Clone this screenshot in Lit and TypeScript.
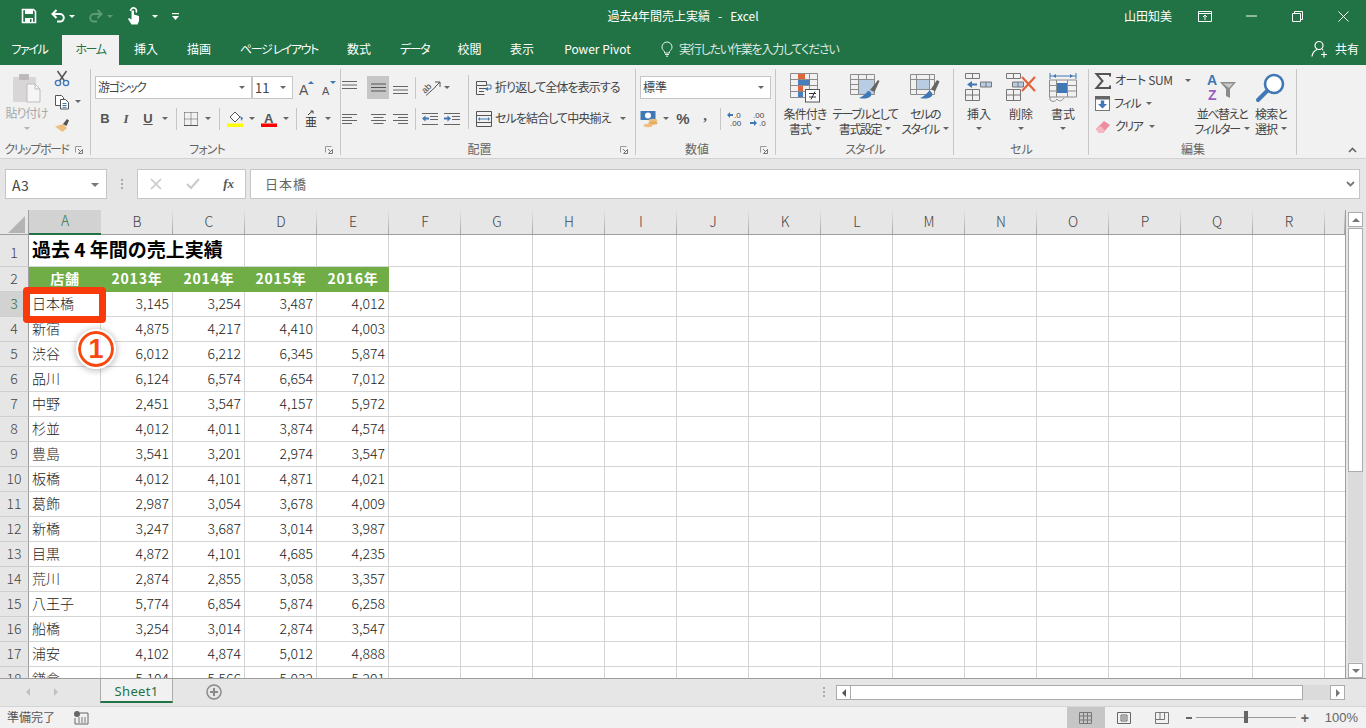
import { LitElement, html, css, svg } from 'lit';
import { customElement } from 'lit/decorators.js';

const ico = (w: number, h: number, body: unknown) =>
  html`<svg width=${w} height=${h} viewBox="0 0 ${w} ${h}" fill="none">${body}</svg>`;

// quick access toolbar
const saveIcon = ico(16, 16, svg`<path d="M1.5 1.5h11l2 2v11h-13z" stroke="#fff" stroke-width="1.6"/><path d="M4 1.5h8v4.5H4z" fill="#fff"/><path d="M4 10h8v5H4z" fill="#fff"/><path d="M9 11h1.5v3H9z" fill="#217346"/>`);
const undoIcon = (c: string) => ico(16, 16, svg`<path d="M6.5 2 2.5 6l4 4M3 6h7a3.8 3.8 0 0 1 0 7.6H7" stroke=${c} stroke-width="2"/>`);
const redoIcon = (c: string) => ico(16, 16, svg`<path d="M9.5 2l4 4-4 4M13 6H6a3.8 3.8 0 0 0 0 7.6h3" stroke=${c} stroke-width="2"/>`);
const touchIcon = ico(16, 20, svg`<path d="M4.5 5a3 3 0 1 1 5.500 1.500" stroke="#fff" stroke-width="1.6"/><path d="M5.500 4.500h2.500v4l5 1.500v5l-1.500 3.500H5.500L2 13l1-1 2.500 1.500z" fill="#fff"/>`);
const customIcon = ico(9, 9, svg`<path d="M1 1h7v1.2H1z" fill="#fff"/><path d="M1 4h7L4.500 8z" fill="#fff"/>`);
const bulbIcon = ico(12, 16, svg`<path d="M3.500 10.500C1.800 9 1 7.800 1 6a5 5 0 0 1 10 0c0 1.800-.8 3-2.500 4.500v1.500h-5zM4 13.500h4M5 15.200h2" stroke="#e8f0eb"/>`);
const userIcon = ico(17, 18, svg`<circle cx="8" cy="5.500" r="4" stroke="#fff" stroke-width="1.200"/><path d="M1 16.500c.5-4 2.500-6 5.200-7M11 9.300c.4.2.8.4 1.100.7M13 11.500v6M10 14.500h6" stroke="#fff" stroke-width="1.200"/>`);

// clipboard
const pasteIcon = ico(30, 30, svg`<rect x="1" y="4" width="23" height="25" rx="1" fill="#d9d6d8"/><rect x="7" y="1" width="10" height="6" rx="1" fill="#bdb9bc"/><path d="M15 11h8l5 5v13H15z" fill="#f6f6f6" stroke="#bdbdbd"/><path d="M23 11v5h5" stroke="#bdbdbd"/>`);
const cutIcon = ico(16, 17, svg`<path d="M3.500 1l7 10M12.500 1l-7 10" stroke="#555" stroke-width="1.500"/><circle cx="4" cy="13" r="2.600" stroke="#3f78b5" stroke-width="1.400"/><circle cx="12" cy="13" r="2.600" stroke="#3f78b5" stroke-width="1.400"/>`);
const copyIcon = ico(16, 16, svg`<path d="M1.500 1.500h6l2 2v8h-8z" fill="#fff" stroke="#555"/><path d="M6.500 5.500h5l3 3v6.500h-8z" fill="#fff" stroke="#555"/><path d="M8.500 9.500h4M8.500 11.500h4M8.500 13.300h4" stroke="#3f78b5"/>`);
const painterIcon = ico(16, 16, svg`<path d="M9 7l4 4-4.500 4L1 9.500z" fill="#edbe7d"/><path d="M9 7l4-5 2 1.500-2.500 5.500z" fill="#555"/>`);

// font
const growIcon = ico(16, 16, svg`<text x="0" y="15" font-size="14" fill="#555" font-family="Liberation Sans">A</text><path d="M9 4l3-3 3 3z" fill="#3f78b5"/>`);
const shrinkIcon = ico(16, 16, svg`<text x="1" y="15" font-size="11" fill="#555" font-family="Liberation Sans">A</text><path d="M9 1h6l-3 3z" fill="#3f78b5"/>`);
const borderIcon = ico(14, 14, svg`<path d="M.5.5h13M.5 7h13M.5.5v13M7 .5v13M13.500.5v13" stroke="#555" stroke-dasharray="1 1"/><path d="M0 13.500h14" stroke="#555"/>`);
const fillIcon = ico(17, 16, svg`<path d="M8 1l5 5-5 5-5-5z" fill="#fff" stroke="#555"/><path d="M13 5l3 2-1.500 3z" fill="#3f78b5"/><rect y="12.500" width="16" height="3.500" fill="#ff0"/>`);
const colorIcon = ico(16, 16, svg`<text x="3" y="12" font-size="13" font-weight="bold" fill="#555" font-family="Liberation Sans">A</text><rect y="12.500" width="16" height="3.500" fill="#f00"/>`);
const phoneticIcon = ico(12, 18, svg`<path d="M3 5l4-3.500M5.500 1h2.500v2.500" stroke="#333"/><text x="0" y="17" font-size="12" fill="#333" font-family="Noto Sans CJK JP">亜</text>`);

// alignment
const topIcon = ico(15, 13, svg`<path d="M0 .5h15M0 4h15M0 7.500h15" stroke="#666"/>`);
const midIcon = ico(15, 13, svg`<path d="M0 3h15M0 6.500h15M0 10h15" stroke="#555"/>`);
const botIcon = ico(15, 13, svg`<path d="M0 5.500h15M0 9h15M0 12.500h15" stroke="#666"/>`);
const alignL = ico(15, 12, svg`<path d="M0 1.500h15M0 4.500h10M0 7.500h15M0 10.500h10" stroke="#666"/>`);
const alignC = ico(15, 12, svg`<path d="M0 1.500h15M2.500 4.500h10M0 7.500h15M2.500 10.500h10" stroke="#666"/>`);
const alignR = ico(15, 12, svg`<path d="M0 1.500h15M5 4.500h10M0 7.500h15M5 10.500h10" stroke="#666"/>`);
const orientIcon = ico(19, 16, svg`<text x="0" y="0" font-size="9" fill="#444" font-family="Liberation Sans" transform="translate(3 14) rotate(-45)">ab</text><path d="M4 15.500l10-9" stroke="#555"/><path d="M13 2h5v5M18 2l-5 5" stroke="#555"/>`);
const outdentIcon = ico(16, 12, svg`<path d="M0 .5h16M8 3.500h8M8 6.500h8M0 11.500h16" stroke="#666"/><path d="M0 5.500l3.500-3v2H7v2H3.500v2z" fill="#3f78b5"/>`);
const indentIcon = ico(16, 12, svg`<path d="M0 .5h16M8 3.500h8M8 6.500h8M0 11.500h16" stroke="#666"/><path d="M7 5.500l-3.500-3v2H0v2h3.500v2z" fill="#3f78b5"/>`);
const wrapIcon = ico(16, 16, svg`<path d="M.5 1.500h10v4H.5zM.5 5.500v9h8M3 8.500h8M3 11.500h5" stroke="#555"/><path d="M11 5h4v4h-4" stroke="#3f78b5"/><path d="M9 9l3-2v4z" fill="#3f78b5"/>`);
const mergeIcon = ico(16, 16, svg`<path d="M.5 .5h15v15H.5zM.5 4.500h15M.5 11.500h15" stroke="#555"/><path d="M3 8h10" stroke="#3f78b5"/><path d="M2 8l2-2v4zM14 8l-2-2v4z" fill="#3f78b5"/>`);

// number
const acctIcon = ico(20, 18, svg`<rect x=".5" y="1" width="15" height="9" fill="#3f78b5"/><circle cx="8" cy="5.500" r="3" fill="#fff"/><ellipse cx="13" cy="10.500" rx="4.500" ry="1.700" fill="#edbe7d"/><ellipse cx="13" cy="13" rx="4.500" ry="1.700" fill="#e7ad5d"/><ellipse cx="8" cy="15.500" rx="4.500" ry="1.700" fill="#edbe7d"/>`);
const incIcon = ico(18, 16, svg`<path d="M0 4l3-3v2h3v2H3v2z" fill="#3f78b5"/><text x="7" y="7" font-size="8" fill="#444" font-family="Liberation Sans">.0</text><text x="3" y="15" font-size="8" fill="#444" font-family="Liberation Sans">.00</text>`);
const decIcon = ico(18, 16, svg`<text x="3" y="7" font-size="8" fill="#444" font-family="Liberation Sans">.00</text><text x="9" y="15" font-size="8" fill="#444" font-family="Liberation Sans">.0</text><path d="M7 12l-3-3v2H0v2h4v2z" fill="#3f78b5"/>`);

// styles
const condIcon = ico(30, 30, svg`<path d="M.5.5h27v24H.5zM.5 6.500h27M.5 12.500h27M.5 18.500h27M8.500.5v24M19.500.5v24" stroke="#8c8c8c"/><rect x="8" y="1" width="7" height="5" fill="#e0643c"/><rect x="8" y="7" width="12" height="5" fill="#4a7ebb"/><rect x="8" y="13" width="5" height="5" fill="#e0643c"/><rect x="8" y="19" width="5" height="5" fill="#4a7ebb"/><rect x="15.500" y="16.500" width="14" height="12.500" fill="#fff" stroke="#555"/><path d="M19 20.500h7M19 24h7M25 18.500l-4 8" stroke="#333"/>`);
const tableIcon = ico(30, 30, svg`<path d="M.5 1.500h24v20H.5zM.5 6.500h24M.5 11.500h24M.5 16.500h24M8.500 1.500v20M16.500 1.500v20" stroke="#8c8c8c"/><rect x="9" y="7" width="15" height="14" fill="#b8cce4"/><path d="M20 17l8-10 1.500 1-5 11z" fill="#666"/><path d="M18 18c2 0 4 2 3 5-3 3-8 3-12 2 3-1 5-3 9-7z" fill="#3f78b5"/>`);
const cellStyleIcon = ico(30, 30, svg`<path d="M.5 1.500h24v20H.5zM.5 6.500h24M.5 16.500h24M6.500 1.500v20M19.500 1.500v20" stroke="#8c8c8c"/><rect x="7" y="7" width="12" height="9" fill="#b8cce4"/><path d="M21 16l6-9 2.500 1.500-4.500 10z" fill="#666"/><path d="M19 18c2 0 4 2 3 5-3 3-8 3-12 2 3-1 5-3 9-7z" fill="#3f78b5"/>`);

// cells
const insertIcon = ico(28, 28, svg`<path d="M.5.5h14v5H.5zM7.500.5v5M.5 16.500h14v11H.5zM.5 22h14M7.500 16.500v11" stroke="#777"/><path d="M15.500 9h11v5h-11zM21 9v5" stroke="#777" fill="#b8cce4"/><path d="M2 11.500l5-3.500v2.500h5v2H7v2.500z" fill="#3f78b5"/>`);
const deleteIcon = ico(30, 28, svg`<path d="M.5.5h14v5H.5zM7.500.5v5M.5 16.500h14v11H.5zM.5 22h14M7.500 16.500v11" stroke="#777"/><path d="M6.500 9h11v5h-11zM12 9v5" stroke="#777" fill="#b8cce4"/><path d="M16 4l13 14M29 4L16 18" stroke="#e0643c" stroke-width="2.200"/>`);
const formatIcon = ico(28, 30, svg`<path d="M.5 7h27v17H.5zM.5 12.500h27M.5 18h27M7.500 7v17M18.500 7v17" stroke="#8c8c8c"/><rect x="8" y="10" width="10" height="10" fill="#3f78b5"/><path d="M1 3h26M1 0v6M27 0v6" stroke="#3f78b5"/><path d="M4 3l3-2v4zM24 3l-3-2v4z" fill="#3f78b5"/><path d="M1 24v3c3 2 5 2 7-1 2 3 5 2 7-1" stroke="#8c8c8c"/>`);

// editing
const sigmaIcon = ico(16, 16, svg`<path d="M15 3.500V1H1.500l6 7-6 7H15v-2.500" stroke="#555" stroke-width="2"/>`);
const fillDownIcon = ico(15, 15, svg`<rect x=".5" y=".5" width="14" height="14" fill="#fff" stroke="#777"/><rect y="0" width="15" height="3.500" fill="#666"/><path d="M7.500 12.500L3 8h2.800V4.500h3.400V8H12z" fill="#3f78b5"/>`);
const eraserIcon = ico(16, 14, svg`<path d="M1 9l8-8 6 4-7 8H4z" fill="#ee8d9d"/><path d="M1 9l3 4h4l2-2.500L5.500 6z" fill="#f5b7c1"/>`);
const sortIcon = ico(30, 28, svg`<text x="0" y="12" font-size="14" font-weight="bold" fill="#3f78b5" font-family="Liberation Sans">A</text><text x="1" y="27" font-size="14" font-weight="bold" fill="#9a5fbf" font-family="Liberation Sans">Z</text><path d="M13 9h16l-6 7v9l-4-2v-7z" fill="#8c8c8c"/><path d="M16 10.500h10l-4 4.500z" fill="#ccc"/>`);
const searchIcon = ico(30, 30, svg`<circle cx="18" cy="11" r="9" fill="#fff" stroke="#3f78b5" stroke-width="2.600"/><path d="M11 18L2 27" stroke="#3f78b5" stroke-width="4" stroke-linecap="round"/>`);

// formula bar & status bar
const xIcon = ico(12, 12, svg`<path d="M1 1l10 10M11 1L1 11" stroke="#c9c9c9" stroke-width="1.600"/>`);
const checkIcon = ico(14, 12, svg`<path d="M1 6l4 4 8-9" stroke="#c9c9c9" stroke-width="2"/>`);
const cornerIcon = ico(17, 17, svg`<path d="M17 0v17H0z" fill="#b4b4b4"/>`);
const macroIcon = ico(14, 13, svg`<circle cx="3" cy="3" r="3" fill="#666"/><path d="M6 2h8v11H1V7" stroke="#666"/><path d="M4 7h8M4 9h8M4 11h8" stroke="#777" stroke-dasharray="2 1"/>`);
const gridViewIcon = ico(13, 12, svg`<path d="M.5.5h12v11H.5zM.5 4h12M.5 8h12M4.500.5v11M8.500.5v11" stroke="#777"/>`);
const pageViewIcon = ico(14, 12, svg`<path d="M.5.5h13v11H.5z" stroke="#666"/><path d="M4 3h6v6H4zM5 5h4M5 7h4" stroke="#666"/>`);
const breakViewIcon = ico(14, 12, svg`<path d="M.5.5h13v11H.5zM.5 7.500h9V.5M5 .5v7" stroke="#777"/>`);
const chevronIcon = ico(9, 6, svg`<path d="M1 1l3.500 3.500L8 1" stroke="#777" stroke-width="1.800"/>`);
const plusCircleIcon = ico(16, 16, svg`<circle cx="8" cy="8" r="7" stroke="#8a8a8a" stroke-width="1.500"/><path d="M8 4v8M4 8h8" stroke="#8a8a8a" stroke-width="2"/>`);
const launcherIcon = ico(8, 8, svg`<path d="M.5.5h6M.5.5v6" stroke="#999"/><path d="M7.500 7.500H3.500l4-4zM3 3l2 2" stroke="#777"/>`);

const TABS = ['ファイル', 'ホーム', '挿入', '描画', 'ページ レイアウト', '数式', 'データ', '校閲', '表示', 'Power Pivot'];
const COLS = ['A', 'B', 'C', 'D', 'E', 'F', 'G', 'H', 'I', 'J', 'K', 'L', 'M', 'N', 'O', 'P', 'Q', 'R', ''];
const HEAD = ['店舗', '2013年', '2014年', '2015年', '2016年'];
const SALES: [string, string, string, string, string][] = [
  ['日本橋', '3,145', '3,254', '3,487', '4,012'],
  ['新宿', '4,875', '4,217', '4,410', '4,003'],
  ['渋谷', '6,012', '6,212', '6,345', '5,874'],
  ['品川', '6,124', '6,574', '6,654', '7,012'],
  ['中野', '2,451', '3,547', '4,157', '5,972'],
  ['杉並', '4,012', '4,011', '3,874', '4,574'],
  ['豊島', '3,541', '3,201', '2,974', '3,547'],
  ['板橋', '4,012', '4,101', '4,871', '4,021'],
  ['葛飾', '2,987', '3,054', '3,678', '4,009'],
  ['新橋', '3,247', '3,687', '3,014', '3,987'],
  ['目黒', '4,872', '4,101', '4,685', '4,235'],
  ['荒川', '2,874', '2,855', '3,058', '3,357'],
  ['八王子', '5,774', '6,854', '5,874', '6,258'],
  ['船橋', '3,254', '3,014', '2,874', '3,547'],
  ['浦安', '4,102', '4,874', '5,012', '4,888'],
  ['鎌倉', '5,104', '5,566', '5,032', '5,201'],
];
const KANA_TABS = ['ファイル', 'ホーム', 'ページ レイアウト', 'データ'];

@customElement('app-root')
export class AppRoot extends LitElement {
  static styles = css`
    :host {
      display: flex;
      flex-direction: column;
      position: relative;
      width: 1366px;
      height: 728px;
      overflow: hidden;
      background: #e6e6e6;
      color: #444;
      font: 12px/1.2 "Noto Sans CJK JP", "Liberation Sans", sans-serif;
      font-feature-settings: "palt";
    }
    :host > * { flex: none; }
    svg { display: block; flex: none; overflow: visible; }

    /* Yu Gothic kana run narrower than Noto's, even with palt */
    .k { letter-spacing: -1.4px; }
    .k2 { letter-spacing: -.9px; }
    .k3 { letter-spacing: -.4px; }

    /* title bar */
    .title { display: grid; grid-template-columns: 1fr auto 1fr; height: 35px; box-sizing: border-box; padding-bottom: 3px; align-items: center; background: #217346; color: #fff; }
    .qat { display: flex; align-items: center; padding-left: 21px; }
    .qat-item { display: flex; align-items: center; justify-content: center; }
    .q-gap { margin-left: 13px; }
    .wincap { display: flex; justify-content: flex-end; align-items: center; }
    .user { margin-right: 10px; font-size: 12px; }
    .winbtn { width: 46px; height: 32px; display: flex; align-items: center; justify-content: center; }

    .caret { width: 0; height: 0; border-left: 3px solid transparent; border-right: 3px solid transparent; border-top: 3px solid #666; flex: none; }
    .caret.w { border-top-color: #fff; }
    .caret.dim { border-top-color: #5c9a78; }

    /* tabs */
    .tabs { display: flex; height: 30px; background: #217346; color: #fff; align-items: stretch; }
    .tablist { display: grid; grid-template-columns: 59px 3px 57px 54px 52px 108px 52px 59px 51px 54px 97px; }
    .tab { display: flex; align-items: center; justify-content: center; white-space: nowrap; padding-bottom: 2px; }
    .tab.on { background: #f1f1f1; color: #217346; }
    .tell { display: flex; align-items: center; gap: 6px; margin-left: 15px; padding-bottom: 2px; color: #dfe9e3; letter-spacing: -1.200px; }
    .share { margin-left: auto; display: flex; align-items: center; gap: 7px; padding: 0 7px 2px 0; }

    /* ribbon */
    .ribbon { display: flex; height: 94px; box-sizing: border-box; background: #f1f1f1; border-bottom: 1px solid #d2d2d2; }
    .group { display: flex; flex-direction: column; position: relative; height: 93px; }
    .group::after { content: ""; position: absolute; right: 0; top: 4px; bottom: 3px; width: 1px; background: #c6c6c6; }
    .g-clip { width: 91px; }
    .g-font { width: 250px; }
    .g-align { width: 295px; }
    .g-num { width: 140px; }
    .g-style { width: 178px; }
    .g-cell { width: 135px; }
    .g-edit { width: 208px; }
    .gbody { flex: 1; display: flex; }
    .glabel { height: 19px; box-sizing: border-box; padding-top: 2px; display: flex; align-items: center; justify-content: center; color: #666; position: relative; white-space: nowrap; }
    .glabel.lch { padding-right: 18px; }
    .launch { position: absolute; right: 8px; top: 7px; letter-spacing: 0; }
    .rest { flex: 1; display: flex; justify-content: flex-end; align-items: flex-end; padding: 0 9px 5px 0; }

    .stack { display: flex; flex-direction: column; padding-top: 11px; gap: 8px; }
    .row { display: flex; align-items: center; height: 23px; }
    .tool { width: 22px; height: 22px; display: flex; align-items: center; justify-content: center; flex: none; }
    .tool.s16 { width: 16px; }
    .tool.s20 { width: 20px; }
    .tool.on { width: 22px; height: 23px; background: #c6c6c6; }
    .cw { width: 12px; height: 22px; display: flex; align-items: center; justify-content: center; flex: none; }
    .vsep { width: 1px; height: 22px; background: #c6c6c6; flex: none; }
    .m5-3 { margin: 0 3px 0 5px; }
    .m5-4 { margin: 0 4px 0 5px; }
    .m4-3 { margin: 0 3px 0 4px; }
    .m4-5 { margin: 0 5px 0 4px; }
    .ml10 { margin-left: 10px; }
    .ml3 { margin-left: 3px; }
    .b { font: bold 13px "Liberation Sans", sans-serif; color: #555; }
    .i { font: italic bold 13px "Liberation Serif", serif; color: #555; }
    .u { font: bold 13px "Liberation Sans", sans-serif; color: #555; text-decoration: underline; }
    .pct { font: bold 15px "Liberation Sans", sans-serif; color: #555; }
    .cm { font: bold 15px "Liberation Serif", serif; color: #555; padding-bottom: 6px; }

    .combo { height: 23px; background: #fff; border: 1px solid #c6c6c6; box-sizing: border-box; display: flex; align-items: center; justify-content: space-between; padding: 0 6px 0 2px; }
    .c-font { width: 157px; }
    .c-size { width: 41px; font-size: 13px; }
    .c-num { width: 131px; }

    .clip-l { width: 50px; padding: 8px 0 0 3px; box-sizing: border-box; display: flex; flex-direction: column; align-items: center; color: #a8a8a8; gap: 3px; white-space: nowrap; }
    .clip-l .caret { border-top-color: #b5b5b5; margin-top: 4px; }
    .clip-r { padding: 2px 0 0 4px; display: flex; flex-direction: column; }
    .clip-r .row { gap: 5px; }
    .pad-font { padding-left: 4px; }
    .pad-num { padding-left: 4px; }
    .a-left { width: 127px; }
    .a-sep { width: 1px; height: 54px; margin-top: 10px; background: #c6c6c6; }
    .a-right { padding-left: 7px; }
    .a-text { margin-left: 3px; white-space: nowrap; }
    .a-caret { margin-left: 9px; }

    .big { display: flex; flex-direction: column; align-items: center; padding-top: 8px; white-space: nowrap; line-height: 15px; flex: none; }
    .big .pic { height: 30px; display: flex; align-items: flex-start; margin-bottom: 3px; }
    .big .lbl { display: flex; align-items: center; gap: 4px; height: 15px; }
    .big .lone { height: 14px; display: flex; align-items: center; }
    .w60 { width: 60px; }
    .w42 { width: 42px; }
    .w54 { width: 54px; }
    .w44 { width: 44px; }
    .st-pad { margin-left: -1px; }
    .ce-pad { padding-left: 4px; }
    .ed-left { width: 106px; padding: 4px 0 0 6px; box-sizing: border-box; display: flex; flex-direction: column; }
    .ed-row { display: flex; align-items: center; height: 23px; white-space: nowrap; }
    .ed-row span { margin-left: 4px; }
    .ed-row .caret { margin-left: 6px; }
    .ed-row .far { margin-left: 12px; }

    /* formula bar */
    .fbar { height: 40px; box-sizing: border-box; padding: 10px 6px 0 5px; display: flex; align-items: flex-start; }
    .fbox { height: 30px; background: #fff; border: 1px solid #c6c6c6; box-sizing: border-box; display: flex; align-items: center; }
    .name { width: 102px; padding: 2px 7px 0 6px; justify-content: space-between; font-size: 14px; letter-spacing: .5px; }
    .name .caret { border-left-width: 4px; border-right-width: 4px; border-top-width: 4px; border-top-color: #777; }
    .dots { width: 30px; height: 30px; display: flex; flex-direction: column; align-items: center; justify-content: center; gap: 2px; }
    .dots i { width: 2px; height: 2px; background: #aaa; }
    .fx { width: 109px; padding: 0 11px 0 12px; justify-content: space-between; margin-right: 4px; }
    .fx em { font: italic 13px "Liberation Serif", serif; color: #555; font-weight: bold; }
    .input { flex: 1; padding: 0 4px 0 14px; justify-content: space-between; color: #666; font-size: 13px; letter-spacing: 1px; }

    /* sheet */
    .sheetwrap { display: flex; height: 468px; margin-top: 11px; }
    .sheet { width: 1346px; height: 468px; overflow: hidden; border-right: 1px solid #9e9e9e; box-sizing: border-box; background: #fff; }
    .cells { display: grid; grid-template-columns: 29px repeat(18, 72px) 20px; grid-template-rows: 25px 32px repeat(17, 25px); font-size: 14px; font-weight: 300; color: #222; font-feature-settings: normal; }
    .cells > div { box-sizing: border-box; white-space: nowrap; display: flex; align-items: center; }
    .corner { background: #e6e6e6; border-right: 1px solid #9e9e9e; border-bottom: 1px solid #9e9e9e; justify-content: flex-end; padding: 4px 3px 0 0; }
    .ch { background: linear-gradient(#e6e6e6, #a6a6a6) right / 1px 100% no-repeat, #e6e6e6; border-bottom: 1px solid #9e9e9e; justify-content: center; color: #444; padding-bottom: 2px; }
    .ch.sel { background: #d2d2d2; color: #217346; border-bottom: 2px solid #217346; }
    .rh { background: #e6e6e6; border-right: 1px solid #9e9e9e; border-bottom: 1px solid #cfcfcf; justify-content: center; color: #444; padding-bottom: 2px; }
    .rh.sel { background: #d2d2d2; color: #217346; }
    .rh.first { padding: 4px 0 0; }
    .c { border-right: 1px solid #d4d4d4; border-bottom: 1px solid #d4d4d4; padding: 0 3px 2px 3px; }
    .c.num { justify-content: flex-end; }
    .c.last { border-right: none; }
    .c.hero { grid-column: span 3; font-size: 19px; font-weight: bold; color: #000; padding-bottom: 2px; }
    .c.green { background: #70ad47; border-color: #70ad47; border-right: none; color: #fff; font-weight: bold; justify-content: center; letter-spacing: .8px; }

    .vscroll { flex: 1; display: flex; flex-direction: column; padding: 2px 3px 0 2px; gap: 1px; }
    .sbtn { box-sizing: border-box; background: #fff; border: 1px solid #ababab; display: flex; align-items: center; justify-content: center; flex: none; }
    .vbtn { height: 15px; }
    .up { width: 0; height: 0; border-left: 4px solid transparent; border-right: 4px solid transparent; border-bottom: 4px solid #777; }
    .down { width: 0; height: 0; border-left: 4px solid transparent; border-right: 4px solid transparent; border-top: 4px solid #777; }
    .vthumb { height: 244px; box-sizing: border-box; background: #fff; border: 1px solid #ababab; flex: none; }
    .vtrack { flex: 1; background: #dbdbdb; margin-top: -1px; }

    /* sheet tabs */
    .sheetbar { height: 28px; display: flex; align-items: flex-start; border-top: 1px solid #9e9e9e; box-sizing: border-box; }
    .nav { width: 100px; height: 26px; display: flex; align-items: center; gap: 24px; padding-left: 26px; box-sizing: border-box; }
    .nl { width: 0; height: 0; border-top: 4px solid transparent; border-bottom: 4px solid transparent; border-right: 4px solid #c0c0c0; }
    .nr { width: 0; height: 0; border-top: 4px solid transparent; border-bottom: 4px solid transparent; border-left: 4px solid #c0c0c0; }
    .stab { width: 73px; height: 24px; box-sizing: border-box; padding-top: 1px; background: #f1f1f1; color: #217346; border-left: 1px solid #ababab; border-right: 1px solid #ababab; border-bottom: 2px solid #217346; display: flex; align-items: center; justify-content: center; font: 13px "Noto Sans", sans-serif; letter-spacing: .3px; }
    .add { margin: 5px 0 0 33px; }
    .hs-dots { margin-left: auto; width: 24px; height: 26px; display: flex; flex-direction: column; align-items: center; justify-content: center; gap: 2px; }
    .hs-dots i { width: 2px; height: 2px; background: #aaa; }
    .hscroll { width: 509px; height: 15px; margin: 6px 21px 0 0; display: flex; }
    .hbtn { width: 15px; height: 15px; }
    .hl { width: 0; height: 0; border-top: 4px solid transparent; border-bottom: 4px solid transparent; border-right: 4px solid #555; }
    .hr { width: 0; height: 0; border-top: 4px solid transparent; border-bottom: 4px solid transparent; border-left: 4px solid #777; }
    .hthumb { width: 453px; box-sizing: border-box; background: #fff; border: 1px solid #ababab; margin-left: -1px; }
    .htrack { flex: 1; background: #dbdbdb; }

    /* status bar */
    .status { height: 22px; background: #f1f1f1; border-top: 1px solid #d4d4d4; box-sizing: border-box; display: flex; align-items: center; padding: 0 8px 0 7px; color: #555; }
    .macro { margin-left: 19px; }
    .views { margin-left: auto; display: flex; height: 21px; }
    .view { width: 38px; display: flex; align-items: center; justify-content: center; }
    .view.on { background: #c6c6c6; }
    .zoomer { display: flex; align-items: center; margin-left: 5px; }
    .zminus { width: 6px; height: 2px; background: #666; }
    .ztrack { width: 100px; height: 1px; background: #999; margin: 0 5px 0 4px; position: relative; }
    .zthumb { position: absolute; left: 48px; top: -6px; width: 4px; height: 12px; background: #666; }
    .zplus { font: bold 14px "Liberation Sans", sans-serif; color: #666; width: 8px; display: flex; justify-content: center; }
    .zpct { margin-left: 16px; font: 13px "Liberation Sans", sans-serif; color: #666; }

    /* annotation over the sheet */
    .mark { position: absolute; left: 23px; top: 287px; width: 83px; height: 36px; box-sizing: border-box; border: 7px solid #f93a0b; border-radius: 4px; }
    .num1 { position: absolute; left: 78px; top: 331px; width: 36px; height: 36px; box-sizing: border-box; border-radius: 50%; border: 3px solid #f9480f; outline: 2px solid #fff; outline-offset: 0; box-shadow: 0 1px 6px 3px rgba(0, 0, 0, .25); background: rgba(255, 255, 255, .7); color: #f9480f; font: bold 27px/30px "Liberation Sans", sans-serif; text-align: center; }
  `;

  private big(pic: unknown, first: string, second: string | null, widthClass: string, kana = '') {
    return html`<div class="big ${widthClass}">
      <div class="pic">${pic}</div>
      ${second === null
        ? html`<div class="lbl">${first}</div><div class="lone"><i class="caret"></i></div>`
        : html`<div class="lbl ${kana}">${first}</div><div class="lbl ${kana}">${second}<i class="caret"></i></div>`}
    </div>`;
  }

  private renderTitle() {
    return html`<div class="title">
      <div class="qat">
        <div class="qat-item">${saveIcon}</div>
        <div class="qat-item q-gap">${undoIcon('#fff')}</div>
        <div class="qat-item ml3"><i class="caret w"></i></div>
        <div class="qat-item q-gap">${redoIcon('#5c9a78')}</div>
        <div class="qat-item ml3"><i class="caret dim"></i></div>
        <div class="qat-item q-gap">${touchIcon}</div>
        <div class="qat-item ml10"><i class="caret w"></i></div>
        <div class="qat-item q-gap">${customIcon}</div>
      </div>
      <div>過去4年間売上実績 &nbsp; - &nbsp; Excel</div>
      <div class="wincap">
        <span class="user">山田知美</span>
        <div class="winbtn">${ico(14, 11, svg`<path d="M.5.5h13v10H.5zM.5 2.500h13M7 9V4.500M5 6l2-2 2 2" stroke="#fff"/>`)}</div>
        <div class="winbtn">${ico(11, 2, svg`<path d="M0 1h11" stroke="#fff"/>`)}</div>
        <div class="winbtn">${ico(11, 11, svg`<path d="M.5 2.500h8v8h-8zM2.500 2.500v-2h8v8h-2" stroke="#fff"/>`)}</div>
        <div class="winbtn">${ico(11, 11, svg`<path d="M.5.5l10 10M10.500.5l-10 10" stroke="#fff"/>`)}</div>
      </div>
    </div>`;
  }

  private renderTabs() {
    const cls = (t: string) => `tab ${t === 'ホーム' ? 'on' : ''} ${KANA_TABS.includes(t) ? 'k' : ''}`;
    return html`<div class="tabs">
      <div class="tablist">
        <div class=${cls(TABS[0])}>${TABS[0]}</div><div></div>
        ${TABS.slice(1).map((t) => html`<div class=${cls(t)}>${t}</div>`)}
      </div>
      <div class="tell">${bulbIcon}<span>実行したい作業を入力してください</span></div>
      <div class="share">${userIcon}<span>共有</span></div>
    </div>`;
  }

  private renderRibbon() {
    return html`<div class="ribbon">
      <div class="group g-clip">
        <div class="gbody">
          <div class="clip-l">${pasteIcon}<span class="k2">貼り付け</span><i class="caret"></i></div>
          <div class="clip-r">
            <div class="row">${cutIcon}</div>
            <div class="row">${copyIcon}<i class="caret"></i></div>
            <div class="row">${painterIcon}</div>
          </div>
        </div>
        <div class="glabel lch k">クリップボード<span class="launch">${launcherIcon}</span></div>
      </div>

      <div class="group g-font">
        <div class="gbody pad-font"><div class="stack">
          <div class="row">
            <div class="combo c-font"><span class="k">游ゴシック</span><i class="caret"></i></div>
            <div class="combo c-size"><span>11</span><i class="caret"></i></div>
            <div class="tool ml3">${growIcon}</div><div class="tool">${shrinkIcon}</div>
          </div>
          <div class="row">
            <div class="tool s20 b">B</div><div class="tool i">I</div><div class="tool u">U</div>
            <div class="cw"><i class="caret"></i></div><i class="vsep m5-3"></i>
            <div class="tool">${borderIcon}</div><div class="cw"><i class="caret"></i></div><i class="vsep m5-4"></i>
            <div class="tool">${fillIcon}</div><div class="cw"><i class="caret"></i></div>
            <div class="tool">${colorIcon}</div><div class="cw"><i class="caret"></i></div><i class="vsep m4-3"></i>
            <div class="tool">${phoneticIcon}</div><div class="cw"><i class="caret"></i></div>
          </div>
        </div></div>
        <div class="glabel lch k2">フォント<span class="launch">${launcherIcon}</span></div>
      </div>

      <div class="group g-align">
        <div class="gbody">
          <div class="stack a-left">
            <div class="row">
              <div class="tool s16">${topIcon}</div><div class="tool on ml10">${midIcon}</div><div class="tool">${botIcon}</div>
              <i class="vsep m4-5"></i><div class="tool s20">${orientIcon}</div><div class="cw"><i class="caret"></i></div>
            </div>
            <div class="row">
              <div class="tool s16">${alignL}</div><div class="tool ml10">${alignC}</div><div class="tool">${alignR}</div>
              <i class="vsep m4-3"></i><div class="tool">${outdentIcon}</div><div class="tool">${indentIcon}</div>
            </div>
          </div>
          <i class="a-sep"></i>
          <div class="stack a-right">
            <div class="row">${wrapIcon}<span class="a-text k2">折り返して全体を表示する</span></div>
            <div class="row">${mergeIcon}<span class="a-text k2">セルを結合して中央揃え</span><i class="caret a-caret"></i></div>
          </div>
        </div>
        <div class="glabel lch">配置<span class="launch">${launcherIcon}</span></div>
      </div>

      <div class="group g-num">
        <div class="gbody pad-num"><div class="stack">
          <div class="row"><div class="combo c-num"><span>標準</span><i class="caret"></i></div></div>
          <div class="row">
            <div class="tool s20">${acctIcon}</div><div class="cw"><i class="caret"></i></div>
            <div class="tool pct">%</div><div class="tool cm">,</div>
            <i class="vsep m4-5"></i><div class="tool s20">${incIcon}</div><div class="tool s20 ml3">${decIcon}</div>
          </div>
        </div></div>
        <div class="glabel lch">数値<span class="launch">${launcherIcon}</span></div>
      </div>

      <div class="group g-style">
        <div class="gbody st-pad">
          ${this.big(condIcon, '条件付き', '書式', 'w60', 'k2')}
          ${this.big(tableIcon, 'テーブルとして', '書式設定', 'w60', 'k')}
          ${this.big(cellStyleIcon, 'セルの', 'スタイル', 'w60', 'k')}
        </div>
        <div class="glabel k2">スタイル</div>
      </div>

      <div class="group g-cell">
        <div class="gbody ce-pad">
          ${this.big(insertIcon, '挿入', null, 'w42')}
          ${this.big(deleteIcon, '削除', null, 'w42')}
          ${this.big(formatIcon, '書式', null, 'w42')}
        </div>
        <div class="glabel">セル</div>
      </div>

      <div class="group g-edit">
        <div class="gbody">
          <div class="ed-left">
            <div class="ed-row">${sigmaIcon}<span class="k3">オート SUM</span><i class="caret far"></i></div>
            <div class="ed-row">${fillDownIcon}<span class="k">フィル</span><i class="caret"></i></div>
            <div class="ed-row">${eraserIcon}<span class="k">クリア</span><i class="caret"></i></div>
          </div>
          ${this.big(sortIcon, '並べ替えと', 'フィルター', 'w54', 'k')}
          ${this.big(searchIcon, '検索と', '選択', 'w44', 'k2')}
        </div>
        <div class="glabel">編集</div>
      </div>

      <div class="rest">${ico(9, 6, svg`<path d="M1 5l3.500-3.500L8 5" stroke="#666" stroke-width="1.600"/>`)}</div>
    </div>`;
  }

  private renderFormula() {
    return html`<div class="fbar">
      <div class="fbox name"><span>A3</span><i class="caret"></i></div>
      <div class="dots"><i></i><i></i><i></i></div>
      <div class="fbox fx">${xIcon}${checkIcon}<em>fx</em></div>
      <div class="fbox input"><span>日本橋</span>${chevronIcon}</div>
    </div>`;
  }

  private renderCells() {
    const blanks = (from: number) =>
      COLS.slice(from).map((_, i) => html`<div class="c ${from + i === COLS.length - 1 ? 'last' : ''}"></div>`);
    return html`<div class="cells">
      <div class="corner">${cornerIcon}</div>
      ${COLS.map((c) => html`<div class="ch ${c === 'A' ? 'sel' : ''}">${c}</div>`)}

      <div class="rh first">1</div>
      <div class="c hero">過去 4 年間の売上実績</div>
      ${blanks(3)}

      <div class="rh">2</div>
      ${HEAD.map((h) => html`<div class="c green">${h}</div>`)}
      ${blanks(5)}

      ${SALES.map((row, i) => html`
        <div class="rh ${i === 0 ? 'sel' : ''}">${i + 3}</div>
        <div class="c">${row[0]}</div>
        ${row.slice(1).map((v) => html`<div class="c num">${v}</div>`)}
        ${blanks(5)}
      `)}
    </div>`;
  }

  render() {
    return html`
      ${this.renderTitle()}
      ${this.renderTabs()}
      ${this.renderRibbon()}
      ${this.renderFormula()}
      <div class="sheetwrap">
        <div class="sheet">${this.renderCells()}</div>
        <div class="vscroll">
          <div class="sbtn vbtn"><i class="up"></i></div>
          <div class="vthumb"></div>
          <div class="vtrack"></div>
          <div class="sbtn vbtn"><i class="down"></i></div>
        </div>
      </div>
      <div class="sheetbar">
        <div class="nav"><i class="nl"></i><i class="nr"></i></div>
        <div class="stab">Sheet1</div>
        <div class="add">${plusCircleIcon}</div>
        <div class="hs-dots"><i></i><i></i><i></i></div>
        <div class="hscroll">
          <div class="sbtn hbtn"><i class="hl"></i></div>
          <div class="hthumb"></div>
          <div class="htrack"></div>
          <div class="sbtn hbtn"><i class="hr"></i></div>
        </div>
      </div>
      <div class="status">
        <span>準備完了</span>
        <span class="macro">${macroIcon}</span>
        <div class="views">
          <div class="view on">${gridViewIcon}</div>
          <div class="view">${pageViewIcon}</div>
          <div class="view">${breakViewIcon}</div>
        </div>
        <div class="zoomer">
          <i class="zminus"></i>
          <div class="ztrack"><i class="zthumb"></i></div>
          <span class="zplus">+</span>
          <span class="zpct">100%</span>
        </div>
      </div>
      <div class="mark"></div>
      <div class="num1">1</div>
    `;
  }
}
